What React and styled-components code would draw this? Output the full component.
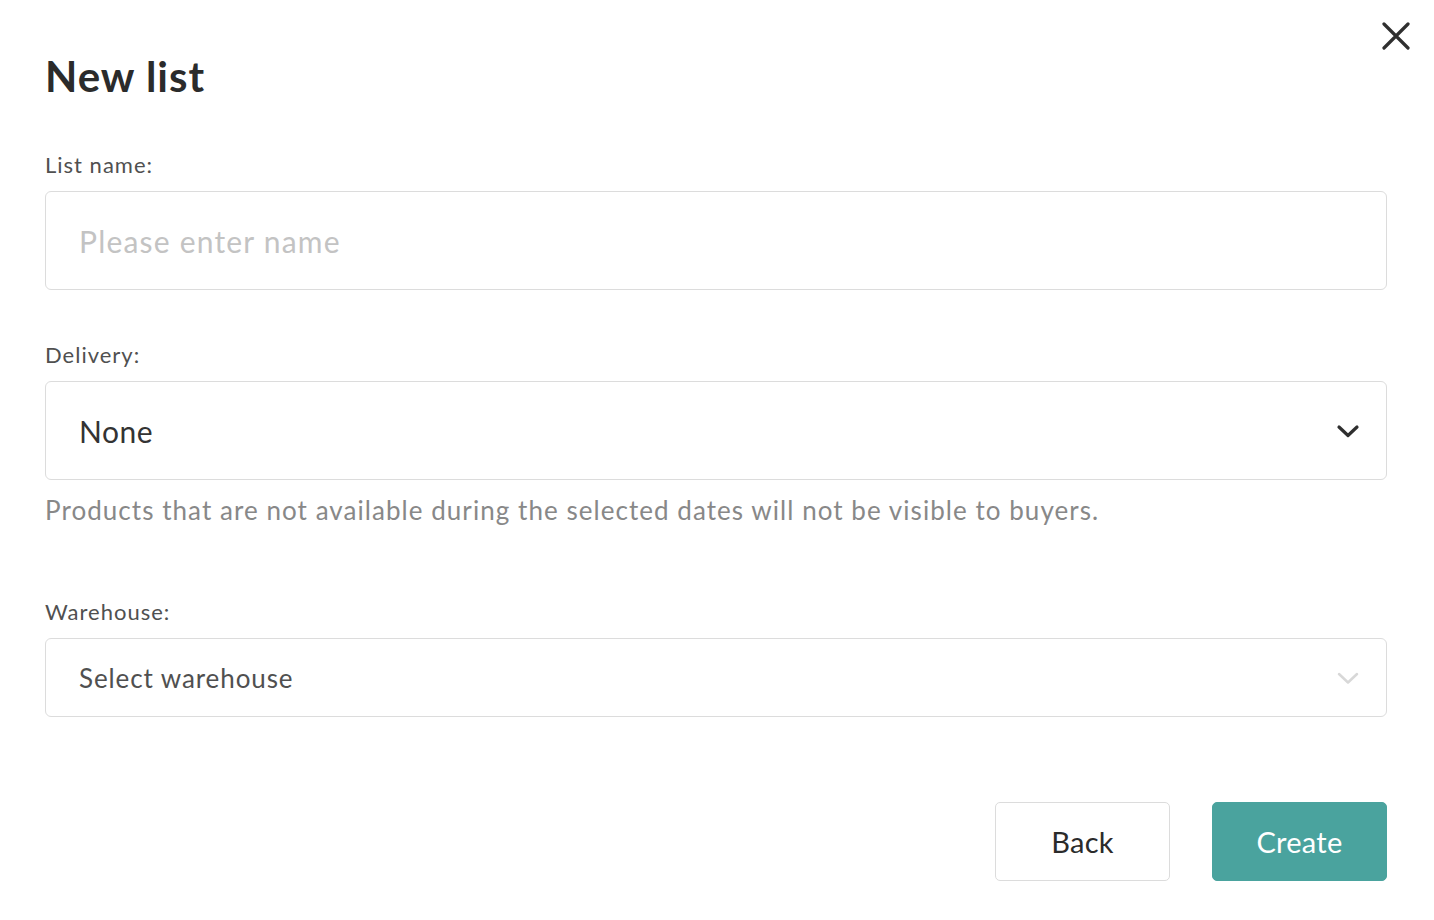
import React from 'react'
import styled, { createGlobalStyle } from 'styled-components'

const GlobalStyle = createGlobalStyle`
    html, body { margin: 0; padding: 0; background: #fff; }
    body { font-family: Lato, "Open Sans", sans-serif; color: #333; -webkit-font-smoothing: antialiased; }
    * { box-sizing: border-box; }
`

const Dialog = styled.div`
    position: relative;
    width: 1434px;
    height: 920px;
    padding: 50px 47px 0 45px;
    display: flex;
    flex-direction: column;
`

const CloseButton = styled.button`
    position: absolute;
    top: 20px;
    right: 22px;
    width: 32px;
    height: 32px;
    padding: 0;
    border: none;
    background: transparent;
    display: flex;
    align-items: center;
    justify-content: center;
    cursor: pointer;
`

const Title = styled.h1`
    margin: 0;
    font-size: 42px;
    line-height: 52px;
    font-weight: 700;
    letter-spacing: 1px;
    color: #2b2b2b;
`

const Field = styled.div`
    display: flex;
    flex-direction: column;
    margin-top: ${props => props.top}px;
`

const Label = styled.label`
    font-size: 22px;
    line-height: 28px;
    letter-spacing: 1px;
    color: #505050;
    margin-bottom: 12px;
`

const Box = styled.div`
    height: ${props => props.tall ? 99 : 79}px;
    border: 1.5px solid #dcdcdc;
    border-radius: 6px;
    padding: 0 26px 0 33px;
    display: flex;
    align-items: center;
    justify-content: space-between;
    font-size: ${props => props.tall ? 30 : 26}px;
    letter-spacing: ${props => props.muted ? 1.2 : props.soft ? 0.9 : 0.5}px;
    color: ${props => props.muted ? '#c3c3c3' : props.soft ? '#505050' : '#333'};
`

const Hint = styled.p`
    margin: 15px 0 0;
    font-size: 26px;
    line-height: 31px;
    letter-spacing: 1.05px;
    color: #888;
`

const Actions = styled.div`
    display: flex;
    justify-content: flex-end;
    gap: 42px;
    margin-top: 85px;
`

const Button = styled.button`
    width: 175px;
    height: 79px;
    border-radius: 5px;
    font-family: Lato, sans-serif;
    font-size: 29px;
    letter-spacing: 0.3px;
    cursor: pointer;
    border: 1.5px solid ${props => props.primary ? '#4aa39e' : '#dcdcdc'};
    background: ${props => props.primary ? '#4aa39e' : '#fff'};
    color: ${props => props.primary ? '#fff' : '#2b2b2b'};
`

const Chevron = ({ color, width }) => (
    <svg width="24" height="16" viewBox="0 0 24 16">
        <path d="M3 4 L12 12.5 L21 4" fill="none" stroke={color} strokeWidth={width} strokeLinecap="round" strokeLinejoin="round" />
    </svg>
)

export default function App() {
    return (
        <>
            <GlobalStyle />
            <Dialog>
                <CloseButton aria-label="Close">
                    <svg width="28" height="28" viewBox="0 0 28 28">
                        <path d="M2 2 L26 26 M26 2 L2 26" stroke="#2f2f2f" strokeWidth="3.2" strokeLinecap="round" />
                    </svg>
                </CloseButton>
                <Title>New list</Title>
                <Field top={49}>
                    <Label>List name:</Label>
                    <Box tall muted>Please enter name</Box>
                </Field>
                <Field top={51}>
                    <Label>Delivery:</Label>
                    <Box tall>
                        None
                        <Chevron color="#2f2f2f" width={3.2} />
                    </Box>
                    <Hint>Products that are not available during the selected dates will not be visible to buyers.</Hint>
                </Field>
                <Field top={72}>
                    <Label>Warehouse:</Label>
                    <Box soft>
                        Select warehouse
                        <Chevron color="#d8d8d8" width={2.5} />
                    </Box>
                </Field>
                <Actions>
                    <Button>Back</Button>
                    <Button primary>Create</Button>
                </Actions>
            </Dialog>
        </>
    )
}
